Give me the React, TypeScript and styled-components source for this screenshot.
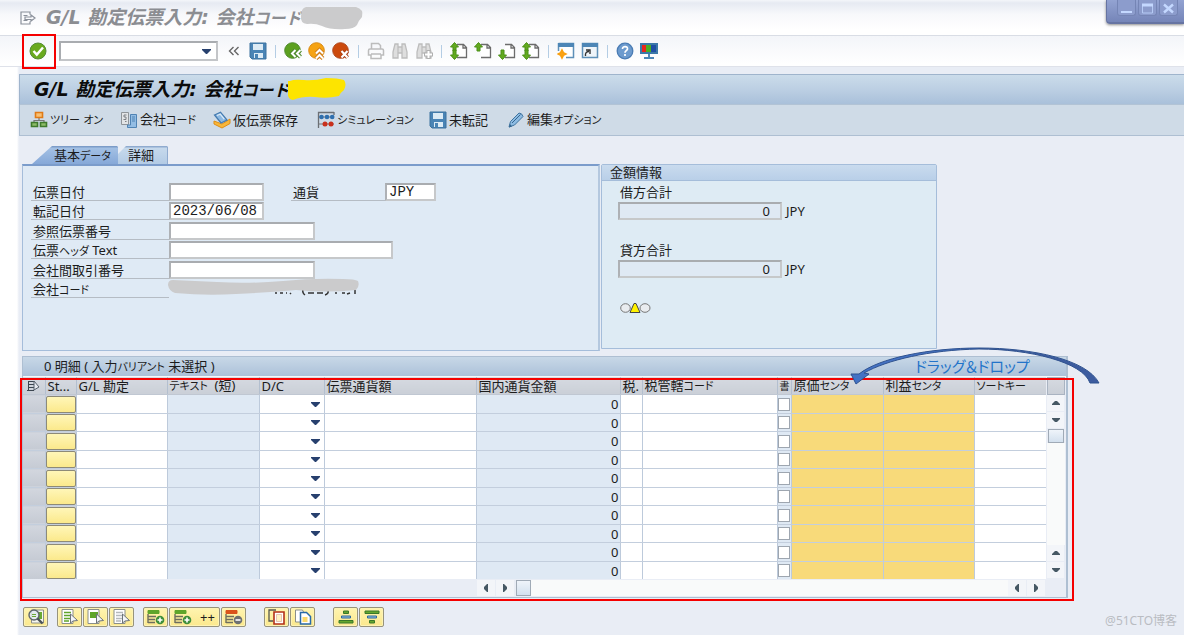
import React from "react";
import styled, { createGlobalStyle, css } from "styled-components";

const ui = `"Noto Sans", "Noto Sans CJK JP", sans-serif`;
const heading = `"DejaVu Sans", "Noto Sans CJK JP", sans-serif`;

const GlobalStyle = createGlobalStyle`
  * { box-sizing: border-box; }
  body {
    margin: 0;
    background: linear-gradient(90deg, #fff 0 17px, #e9edf5 19px);
    font-family: ${ui};
    font-size: 13px;
    line-height: 18px;
    color: #1c1c1c;
    font-feature-settings: "palt";
  }
  button, input, select { font: inherit; color: inherit; margin: 0; padding: 0; border: 0; border-radius: 0; }
  button { background: none; }
  svg { display: block; flex: none; }
`;

/* ---------- text ---------- */

/* Katakana is set one step smaller than the kanji around it. */
const KanaRun = styled.span`
  font-size: 11px;
`;

const Kana = ({ text }: { text: string }) => (
  <span>
    {text.split(/([ァ-ヶー]+)/).map((part, i) => (i % 2 ? <KanaRun key={i}>{part}</KanaRun> : part))}
  </span>
);

/* ---------- frame ---------- */

const Page = styled.div`
  position: relative;
  min-height: 100vh;
  overflow: hidden;
`;

const TitleBar = styled.header`
  display: flex;
  align-items: center;
  height: 36px;
  padding: 0 0 0 20px;
  gap: 10px;
  background: linear-gradient(#f4f6fa 0, #e6eaf2 3px, #f7f8fb 14px, #fff 30px);
  border-bottom: 1px solid #d9dde5;
`;

const Title = styled.h1<{ $muted?: boolean }>`
  display: flex;
  align-items: center;
  margin: 0;
  font: italic bold 19px/24px ${heading};
  white-space: pre;
  color: ${(p) => (p.$muted ? "#8b8d92" : "#0b0b0b")};
  ${KanaRun} { font-size: 16px; }
`;

const Redaction = styled.svg`
  margin-left: -2px;
`;

const WindowControls = styled.div`
  position: absolute;
  top: 0;
  right: 0;
  display: flex;
  gap: 2px;
  width: 78px;
  height: 24px;
  padding: 0 0 0 10px;
  background: linear-gradient(#93a3d2, #7585b8);
  border: solid #6674a2;
  border-width: 0 0 2px 1px;
  border-radius: 0 0 0 4px;
  box-shadow: 0 1px 3px #888;
`;

const WindowButton = styled.button`
  display: grid;
  place-items: center;
  width: 19px;
  height: 16px;
  border: 1px solid #7585b5;
  border-top: 0;
  border-radius: 0 0 3px 3px;
  background: #8c9ccc;
`;

const SystemBar = styled.nav`
  display: flex;
  align-items: center;
  height: 31px;
  padding-left: 26px;
  background: linear-gradient(#f3f5f9, #fff 28px);
  border-bottom: 1px solid #dfe2ea;
`;

const IconButton = styled.button`
  display: grid;
  place-items: center;
  width: 24px;
  height: 24px;
`;

const Marked = styled.div`
  position: relative;
  margin-right: 9px;
  &::after {
    content: "";
    position: absolute;
    inset: -5px -6px -6px -4px;
    border: 2px solid #f50000;
    pointer-events: none;
  }
`;

const CommandField = styled.div`
  display: flex;
  align-items: center;
  width: 159px;
  height: 20px;
  margin-right: 4px;
  background: #fff;
  border: 2px solid #b3b5b9;
  border-color: #a9acb0 #c3c5c8 #c3c5c8 #a9acb0;
  input { flex: 1; min-width: 0; background: none; outline: 0; }
  button { width: 20px; height: 16px; display: grid; place-items: center; }
`;

const Divider = styled.span`
  width: 1px;
  height: 13px;
  margin: 0 5px;
  background: #b4cde4;
`;

const Main = styled.main`
  margin-left: 19px;
  padding-top: 7px;
`;

const ScreenTitle = styled.div`
  display: flex;
  align-items: center;
  height: 31px;
  padding-left: 14px;
  background: linear-gradient(#cbdcea, #bccfe3 50%, #a9c0da);
  border: solid #9fb4cc;
  border-width: 1px 0 1px 1px;
  border-bottom-color: #b2c3d5;
`;

const AppBar = styled.nav`
  display: flex;
  align-items: center;
  height: 31px;
  padding: 0 0 1px 10px;
  background: #cfdbe7;
  border: solid #aebfd2;
  border-width: 0 0 1px 1px;
`;

const AppButton = styled.button<{ $slot: number }>`
  display: flex;
  align-items: center;
  gap: 2px;
  width: ${(p) => p.$slot}px;
  height: 22px;
  white-space: nowrap;
`;

/* ---------- header data ---------- */

const Workspace = styled.div`
  padding: 10px 116px 0 3px;
`;

const Tabs = styled.div`
  display: flex;
  height: 18px;
  padding-left: 10px;
`;

const Tab = styled.button<{ $active?: boolean }>`
  height: 18px;
  line-height: 18px;
  text-align: left;
  white-space: nowrap;
  ${(p) =>
    p.$active
      ? css`
          width: 86px;
          padding-left: 22px;
          background: linear-gradient(#7c9cc8 0 1px, #a3c0e4 2px, #86a8d8);
          clip-path: polygon(20px 0, 85px 0, 86px 1px, 86px 100%, 0 100%);
        `
      : css`
          width: 50px;
          padding-left: 10px;
          background: linear-gradient(#90abcf 0 1px, #c6d9ec 2px, #b3cbe5);
          border-right: 1px solid #90abcf;
          clip-path: polygon(8px 0, 49px 0, 50px 1px, 50px 100%, 0 100%, 0 8px);
        `}
`;

const Panels = styled.div`
  display: flex;
  gap: 1px;
  padding-right: 131px;
`;

const FormPanel = styled.section`
  flex: 1;
  height: 187px;
  padding: 17px 0 0 8px;
  background: #dfeaf5;
  border: 1px solid #a5bdda;
  border-top: 2px solid #7b9ccb;
  border-right: 2px solid #b4c8df;
`;

const FormRow = styled.div`
  display: flex;
  height: 19px;
  &:nth-child(even) { height: 20px; }
`;

const FieldLabel = styled.label<{ $w: number; $gap?: number }>`
  width: ${(p) => p.$w}px;
  height: 18px;
  margin-left: ${(p) => p.$gap ?? 0}px;
  padding-left: 2px;
  border-bottom: 1px solid #b5bcc4;
  white-space: pre;
`;

const Field = styled.input<{ $w: number }>`
  width: ${(p) => p.$w}px;
  height: 18px;
  padding-left: 2px;
  font: 14px/14px "Liberation Mono", monospace;
  background: #fff;
  border: 2px solid;
  border-color: #a9acb0 #c6c8ca #c6c8ca #aeb1b5;
  &:read-only {
    padding-right: 10px;
    font: 13px/14px ${ui};
    text-align: right;
    background: #dfe9f4;
  }
`;

const Redacted = styled.svg`
  margin: -3px 0 0 -2px;
`;

const AmountPanel = styled.section`
  width: 336px;
  height: 185px;
  background: #deebf4;
  border: 1px solid #a5bdda;
  border-radius: 2px 2px 0 0;
`;

const PanelHeading = styled.h2`
  height: 16px;
  margin: 0;
  padding-left: 8px;
  font-size: 13px;
  line-height: 14px;
  font-weight: normal;
  background: linear-gradient(#c9dbee, #b9cfe8);
  border-bottom: 1px solid #a5bdda;
`;

const AmountBody = styled.div`
  padding: 2px 16px;
`;

const AmountGroup = styled.div`
  height: 58px;
  label { display: block; height: 19px; padding-left: 2px; }
`;

const AmountLine = styled.div`
  display: flex;
  gap: 4px;
  white-space: nowrap;
`;

/* ---------- item table ---------- */

const ItemsFrame = styled.section`
  position: relative;
  margin-top: 5px;
  border: 1px solid #aebfd2;
  border-right-width: 2px;
  background: #e9edf5;
`;

const ItemsTitle = styled.h2`
  height: 20px;
  margin: 0;
  padding-left: 21px;
  font-size: 13px;
  line-height: 19px;
  font-weight: normal;
  background: linear-gradient(#c8d8e7, #acc1d9);
  border-bottom: 1px solid #f4f7fa;
  white-space: pre;
`;

const RedFrame = styled.div`
  position: absolute;
  inset: 21px -8px -4px -3px;
  border: 2px solid #f50000;
  pointer-events: none;
`;

const ItemsBody = styled.div`
  display: grid;
  grid-template-columns: 1fr 20px;
`;

const Items = styled.table`
  width: 100%;
  table-layout: fixed;
  border-collapse: collapse;
  th {
    height: 17px;
    padding: 0 0 0 2px;
    font-weight: normal;
    text-align: left;
    line-height: 16px;
    white-space: pre;
    background: linear-gradient(#d6dae1, #cacfd7);
    border-right: 1px solid #b3bfcf;
    border-bottom: 1px solid #c0c7d2;
  }
  th svg { margin-left: 1px; }
  td {
    height: 19px;
    padding: 0;
    line-height: 16px;
    background: #fff;
    border-right: 1px solid #bdcadb;
    border-bottom: 1px solid #c3cedd;
  }
  tr:nth-child(even) td { height: 18px; }
  tr:last-child td { height: 17px; border-bottom: 0; }
  td:last-child, th:last-child { border-right: 0; }
`;

const FlagHeading = styled.span`
  font-size: 10px;
`;

const Cell = styled.td<{ $tone?: "blue" | "gold" | "grey" }>`
  && {
    background: ${(p) =>
      p.$tone === "blue" ? "#dfe9f4" : p.$tone === "gold" ? "#f8da7a" : p.$tone === "grey" ? "#cdd2db" : "#fff"};
    text-align: ${(p) => (p.$tone === "blue" ? "right" : "left")};
    padding-right: ${(p) => (p.$tone === "blue" ? "1px" : "0")};
  }
`;

const CellInput = styled.input`
  display: block;
  width: 100%;
  height: 15px;
  background: transparent;
  outline: 0;
`;

const RowSelector = styled.button`
  display: block;
  width: 100%;
  height: 16px;
  background: linear-gradient(#d2d6de, #c6cbd4);
`;

const StatusButton = styled.button`
  display: block;
  width: 100%;
  height: 17px;
  background: linear-gradient(#fff6b8, #fbe98c);
  border: 1px solid #8d8a78;
  border-radius: 2px;
`;

const Picker = styled.div`
  position: relative;
  select {
    display: block;
    width: 100%;
    height: 15px;
    appearance: none;
    background: transparent;
    outline: 0;
  }
  svg { position: absolute; right: 4px; top: 5px; pointer-events: none; }
`;

const Tick = styled.input`
  display: block;
  width: 12px;
  height: 13px;
  appearance: none;
  background: #fff;
  border: 1px solid #9ea6b0;
`;

const VerticalBar = styled.div`
  display: flex;
  flex-direction: column;
  padding: 0 1px;
`;

const HorizontalBar = styled.div`
  display: flex;
  height: 18px;
  margin: 0 20px 0 454px;
  padding: 1px 0;
  button { width: 19px; }
`;

const Corner = styled.button`
  height: 18px;
  background: linear-gradient(#d6dae1, #cacfd7);
  border: 1px solid #a9b3c1;
`;

const Arrow = styled.button`
  display: grid;
  place-items: center;
  width: 18px;
  height: 17px;
  background: #f3f5f9;
  border: solid #e9edf5;
  border-width: 0 1px 1px 0;
`;

const Track = styled.div`
  flex: 1;
  background: #f9fafa;
`;

const Thumb = styled.div<{ $horizontal?: boolean }>`
  width: ${(p) => (p.$horizontal ? 15 : 16)}px;
  height: ${(p) => (p.$horizontal ? 16 : 14)}px;
  margin: ${(p) => (p.$horizontal ? "0 0 0 1px" : "0 1px")};
  background: linear-gradient(#eff4fa, #d3e0ee);
  border: 1px solid #a0aab6;
`;

const FooterBar = styled.div`
  display: flex;
  gap: 1px;
  margin: 9px 0 0 1px;
`;

const FooterButton = styled.button<{ $w?: number; $gap?: number }>`
  display: flex;
  align-items: center;
  justify-content: center;
  gap: 8px;
  width: ${(p) => p.$w ?? 25}px;
  height: 20px;
  margin-left: ${(p) => p.$gap ?? 0}px;
  background: linear-gradient(#fff4b0, #fbe88d);
  border: 1px solid #97937c;
  border-radius: 2px;
  box-shadow: inset 0 0 0 1px #fdf3b4;
`;

const Callout = styled.div`
  position: absolute;
  top: -11px;
  right: -37px;
  width: 254px;
  height: 42px;
  svg { position: absolute; inset: 0; }
`;

const CalloutText = styled.span`
  position: absolute;
  top: 10px;
  left: 66px;
  font-size: 15px;
  line-height: 20px;
  color: #2273c9;
  white-space: nowrap;
`;

const Watermark = styled.span`
  position: absolute;
  right: 7px;
  bottom: 5px;
  font-size: 12px;
  color: #b9bcc2;
`;

/* ---------- icons ---------- */

type IconProps = { children: React.ReactNode; w?: number; h?: number };
const Icon = ({ children, w = 18, h = 18 }: IconProps) => (
  <svg width={w} height={h} viewBox={`0 0 ${w} ${h}`} fill="none" aria-hidden="true">
    {children}
  </svg>
);

const OkIcon = () => (
  <Icon>
    <circle cx="9" cy="9" r="8" fill="#6aaa1e" stroke="#548c35" />
    <path d="M4.500 9l3.300 3.600L14 5.500" stroke="#fff" strokeWidth="2.400" />
  </Icon>
);
const SaveIcon = () => (
  <Icon>
    <path d="M1 1h16v16H3l-2-2z" fill="#4a84b5" stroke="#3c739f" />
    <path d="M4 2h10v6H4z" fill="#dcebf5" />
    <path d="M5 11h9v5H5z" fill="#dcebf5" />
    <path d="M6 12h3v4H6z" fill="#4a84b5" />
  </Icon>
);
const BackIcon = () => (
  <Icon>
    <circle cx="8.500" cy="8.500" r="7.800" fill="#5ca01f" stroke="#4e8a2d" />
    <path d="M11.500 8l-3.500 3.500 3.500 3.500M16.500 8L13 11.500l3.500 3.500" stroke="#4e8a2d" strokeWidth="4" />
    <path d="M11.500 8l-3.500 3.500 3.500 3.500M16.500 8L13 11.500l3.500 3.500" stroke="#fff" strokeWidth="2" />
  </Icon>
);
const ExitIcon = () => (
  <Icon>
    <circle cx="8.500" cy="8.500" r="7.800" fill="#f6a313" stroke="#d98b17" />
    <path d="M8 11.500L11.500 8l3.500 3.500M8 16.500l3.500-3.500 3.500 3.500" stroke="#d07d18" strokeWidth="4" />
    <path d="M8 11.500L11.500 8l3.500 3.500M8 16.500l3.500-3.500 3.500 3.500" stroke="#fff" strokeWidth="2" />
  </Icon>
);
const CancelIcon = () => (
  <Icon>
    <circle cx="8.500" cy="8.500" r="7.800" fill="#cc4a0c" stroke="#b04a20" />
    <path d="M9.500 9l6 6.500M15.500 9l-6 6.500" stroke="#a83a10" strokeWidth="4" />
    <path d="M9.500 9l6 6.500M15.500 9l-6 6.500" stroke="#fff" strokeWidth="2.200" />
  </Icon>
);
const PrintIcon = () => (
  <Icon>
    <path d="M4.500 7V1.500h7l2 2V7M1.500 8.500q0-1.500 1.500-1.500h12q1.500 0 1.500 1.500V13H14v3.500H4V13H1.500zM4 12h10" stroke="#bcbcbc" strokeWidth="1.500" />
  </Icon>
);
const FindIcon = ({ more }: { more?: boolean }) => (
  <Icon>
    <path d="M4 2h3v3h4V2h3l2 8v6h-5v-5H7v5H2v-6zM7 5v6M11 5v6" fill="#dedede" stroke="#bdbdbd" strokeWidth="1.300" />
    {more && <path d="M13.500 8v9M9 12.500h9" stroke="#b0b0b0" strokeWidth="4" />}
    {more && <path d="M13.500 9v7M10 12.500h7" stroke="#fff" strokeWidth="2" />}
  </Icon>
);
const PageIcon = ({ up, down }: { up?: boolean; down?: boolean }) => (
  <Icon>
    <path d="M7 2.500h6.500l3 3v10H7M13 2.500V6h3.500" fill="#fff" stroke="#6c6c6c" strokeWidth="1.300" />
    {up && <path d="M4.500 .5L.5 5h2.500v4h3V5h2.500z" fill="#62a91f" stroke="#4b9018" />}
    {down && <path d="M4.500 17.500L.5 13h2.500V8h3v5h2.500z" fill="#62a91f" stroke="#4b9018" />}
  </Icon>
);
const SessionIcon = () => (
  <Icon>
    <path d="M1.500 1.500h15v14H9M1.500 1v8" fill="#fff" stroke="#5e90b8" strokeWidth="1.500" />
    <path d="M1 1h16v4H1z" fill="#4d86b6" />
    <path d="M5 8.500l1.200 2.300L8.500 12l-2.300 1.200L5 15.500l-1.200-2.300L1.500 12l2.300-1.200z" fill="#fba51a" stroke="#f9a010" strokeWidth="2" />
  </Icon>
);
const ShortcutIcon = () => (
  <Icon>
    <path d="M1.500 1.500h15v14h-15z" fill="#eef4f9" stroke="#5e90b8" strokeWidth="1.500" />
    <path d="M1 1h16v4H1z" fill="#4d86b6" />
    <path d="M4.500 14c-.5-3 1-4.500 3.500-4.500M5 8h4v4" stroke="#333" strokeWidth="1.400" />
  </Icon>
);
const HelpIcon = () => (
  <Icon>
    <circle cx="9" cy="9" r="7.800" fill="#6d9bce" stroke="#4a7cb4" strokeWidth="1.300" />
    <path d="M6.500 7c0-3.500 5.500-3 5 0-.3 1.700-2.500 1.800-2.500 3.800M9 12v2" stroke="#fff" strokeWidth="1.700" />
  </Icon>
);
const MonitorIcon = () => (
  <Icon>
    <path d="M0 1h18v11H0z" fill="#3b78a8" />
    <path d="M2 3h4v7H2z" fill="#e8261c" />
    <path d="M6 3h5v7H6z" fill="#4cae22" />
    <path d="M11 3h5v7h-5z" fill="#1f4fa4" />
    <path d="M8 12h2v3h4v2H4v-2h4z" fill="#4d86b6" />
  </Icon>
);
const TreeIcon = () => (
  <Icon>
    <path d="M9 6v4M4 12V9.500h10V12" stroke="#777" strokeWidth="1.200" />
    <path d="M5.500 1.500h7v5h-7z" fill="#f9c173" stroke="#e07a17" strokeWidth="1.600" />
    <path d="M1.500 11.500h6v4h-6zM10.500 11.500h6v4h-6z" fill="#8dbb68" stroke="#3f7a2b" strokeWidth="1.600" />
  </Icon>
);
const CompanyIcon = () => (
  <Icon>
    <path d="M1.500 1.500h7v12h-7z" fill="#e2e4e6" stroke="#8f9499" />
    <path d="M6.500 4h-2.500v2h2v2.500h-2.500M5 10.500h1.500" stroke="#7b7f84" />
    <path d="M10.500 3.500h6v13h-9V14h3z" fill="#93bde4" stroke="#4f83b4" />
    <path d="M12 6h3M12 8h3M12 10h3" stroke="#4f83b4" />
  </Icon>
);
const ParkIcon = () => (
  <Icon>
    <path d="M1 10l8 3 8-5v4.500L9 17l-8-4z" fill="#f8b73a" stroke="#e08e14" />
    <path d="M1.500 4L7.500 1.200 14 9 8 12z" fill="#8db9e2" stroke="#457bb0" strokeWidth="1.300" />
    <path d="M4 4.500L7.200 3.200l4 5" stroke="#dcebf7" strokeWidth="1.300" />
  </Icon>
);
const SimulateIcon = () => (
  <Icon>
    <path d="M1.500 17V1.500H17M17 1v3" stroke="#6b6f74" strokeWidth="1.300" />
    <path d="M2 6h15M2 13h15" stroke="#777" />
    <circle cx="4.500" cy="6" r="2.300" fill="#2f6fae" />
    <circle cx="10" cy="6" r="2.300" fill="#2f6fae" />
    <circle cx="15.200" cy="6" r="2.300" fill="#2f6fae" />
    <circle cx="8" cy="13" r="2.500" fill="#c9301c" />
    <circle cx="14" cy="13" r="2.500" fill="#c9301c" />
  </Icon>
);
const PencilIcon = () => (
  <Icon>
    <path d="M2 16l1.500-5.500L12 2q3 0 4 3.500L7.500 14z" fill="#8dbbe2" stroke="#3f739f" />
    <path d="M5 12L13.500 3.500" stroke="#35668f" />
    <path d="M2 16.500l3-1L3 13z" fill="#35668f" />
  </Icon>
);
const ExitArrowIcon = () => (
  <Icon w={16} h={14}>
    <path d="M10 3.500V1H1v12h9v-2.500M3.500 4.500h4M3.500 9.500h4M5 6h6V4l4 3-4 3V8.500H5z" stroke="#8a909a" strokeWidth="1.200" />
  </Icon>
);
const DropArrow = () => (
  <svg width="9" height="5" viewBox="0 0 9 5"><path d="M0 0h9v1L5 5H4L0 1z" fill="#27406e" /></svg>
);
const ConfigIcon = () => (
  <Icon w={14} h={12}>
    <path d="M8 1.500H2.500M8 4.500H2.500M8 7.500H2.500M1 10.500h7M2.500 1v9" stroke="#3c4650" />
    <path d="M8 1v9l5-3z" fill="#e7eaf0" stroke="#57616c" />
  </Icon>
);

const rotations = { up: 180, down: 0, left: 90, right: 270 };
const ScrollArrow = ({ dir }: { dir: keyof typeof rotations }) => (
  <Arrow aria-label={dir}>
    <svg width="10" height="10" viewBox="0 0 10 10">
      <path d="M1 3h8v1L6 7H4L1 4z" fill="#465864" transform={`rotate(${rotations[dir]} 5 5)`} />
    </svg>
  </Arrow>
);

const ListGlyph = ({ color, fill }: { color: string; fill?: boolean }) => (
  <Icon w={18} h={16}>
    <path d="M1 .5h11v14H1z" fill="#fff" stroke="#8a8f8a" />
    {fill ? <path d="M3 3h8v6H3z" fill={color} /> : <path d="M3 3.500h7M3 6.500h7M3 9.500h6M3 12h5" stroke={color} strokeWidth="1.600" />}
    <path d="M9.500 5v9l2.500-2 4.500-.5z" fill="#f4f6f8" stroke="#6d747a" />
  </Icon>
);
const RowGlyph = ({ color, minus }: { color: string; minus?: boolean }) => (
  <Icon w={18} h={16}>
    <path d="M1 1.500h11v3H1z" fill={color} stroke={color} />
    <path d="M1 7.500h8M1 10.500h7M1 13.500h7M1 5v9" stroke="#6e6e5e" strokeWidth="1.400" />
    <circle cx="13" cy="11" r="4.300" fill={minus ? "#6d7072" : "#3f8f3c"} />
    <path d={minus ? "M10.500 11h5" : "M13 8.500v5M10.500 11h5"} stroke="#fff" strokeWidth="1.600" />
  </Icon>
);
const DetailGlyph = () => (
  <Icon w={18} h={16}>
    <path d="M4.500 1h12v13h-12z" fill="#f6f6ee" stroke="#8a8f8a" />
    <path d="M11 3h4v7h-4z" fill="#69a832" />
    <circle cx="7" cy="6" r="5" fill="#dfe8ee" fillOpacity=".85" stroke="#5e666c" strokeWidth="1.400" />
    <path d="M5 5.500h4M5 7.500h4" stroke="#69a832" />
    <path d="M10.500 9.500L15.500 14.500" stroke="#4c5358" strokeWidth="2.400" />
  </Icon>
);
const CutGlyph = () => (
  <Icon w={18} h={16}>
    <path d="M8 1H1v11h4" stroke="#55584f" strokeWidth="1.300" />
    <path d="M6 3h10v12H6z" fill="#fff" stroke="#b23018" strokeWidth="1.600" />
    <path d="M8.500 5.500h5v7h-5z" fill="#fff2c0" stroke="#d8a090" strokeWidth=".6" />
  </Icon>
);
const CopyGlyph = () => (
  <Icon w={18} h={16}>
    <path d="M1.500 1h7l1 2v10h-8z" fill="#fff" stroke="#8a8f8a" />
    <path d="M6.500 3.500h6l4 4V15h-10z" fill="#fff" stroke="#2869a8" strokeWidth="1.500" />
    <path d="M8.500 8h5v5h-5z" fill="#fbd96b" />
  </Icon>
);
const SortGlyph = ({ desc }: { desc?: boolean }) => (
  <Icon w={18} h={16}>
    <g transform={desc ? "matrix(1 0 0 -1 0 16)" : undefined}>
      <path d="M6.500 2h5v2.500h-5zM2 11.500h14V14H2z" fill="#64a62e" stroke="#39782a" />
      <path d="M4.500 7h9v2h-9z" fill="#8fbce0" stroke="#2c699e" />
    </g>
  </Icon>
);

/* ---------- data ---------- */

const columns: [string, number?][] = [
  ["", 22], ["St...", 31], ["G/L 勘定", 91], ["テキスト  (短)", 92], ["D/C", 65], ["伝票通貨額", 152],
  ["国内通貨金額", 144], ["税.", 22], ["税管轄コード", 135], ["書", 14], ["原価センタ", 92], ["利益センタ", 91], ["ソートキー"],
];
const rows = Array.from({ length: 10 }, (_, i) => i + 1);

const appActions: [string, React.ReactNode, number][] = [
  ["ツリー オン", <TreeIcon />, 90],
  ["会社コード", <CompanyIcon />, 93],
  ["仮伝票保存", <ParkIcon />, 104],
  ["シミュレーション", <SimulateIcon />, 112],
  ["未転記", <SaveIcon />, 78],
  ["編集オプション", <PencilIcon />, 100],
];

const heads = (name: string, i: number) => {
  if (i === 0) return <ConfigIcon />;
  if (name === "書") return <FlagHeading>{name}</FlagHeading>;
  return <Kana text={name} />;
};

const Action = ({ label, children }: { label: string; children: React.ReactNode }) => (
  <IconButton aria-label={label}>{children}</IconButton>
);

export default function App() {
  return (
    <Page>
      <GlobalStyle />
      <TitleBar>
        <ExitArrowIcon />
        <Title $muted>
          <Kana text="G/L 勘定伝票入力: 会社コード" />
          <Redaction width="64" height="24" viewBox="0 0 64 24">
            <path d="M6 1H56q8 2 6 10-3 3-5 8-3 4-12 4-14 1-23-3-7-3-15-2-7-1-6-8Q1 2 6 1z" fill="#cbcbcc" />
          </Redaction>
        </Title>
      </TitleBar>
      <WindowControls>
        <WindowButton aria-label="最小化">
          <Icon w={13} h={12}><path d="M1 10h11" stroke="#c4d8ff" strokeWidth="2" /></Icon>
        </WindowButton>
        <WindowButton aria-label="最大化">
          <Icon w={13} h={12}><path d="M1.500 2v9h10V2" stroke="#b5caf5" /><path d="M1 3h11" stroke="#c4d8ff" strokeWidth="3" /></Icon>
        </WindowButton>
        <WindowButton aria-label="閉じる">
          <Icon w={13} h={12}><path d="M2 2.500l9 8M11 2.500l-9 8" stroke="#c4d8ff" strokeWidth="2.400" /></Icon>
        </WindowButton>
      </WindowControls>
      <SystemBar>
        <Marked><Action label="Enter"><OkIcon /></Action></Marked>
        <CommandField>
          <input aria-label="コマンド" />
          <button aria-label="履歴"><DropArrow /></button>
        </CommandField>
        <Action label="折りたたむ">
          <Icon w={12} h={10}><path d="M5.500 1l-4 4 4 4M10.500 1l-4 4 4 4" stroke="#666" strokeWidth="1.400" /></Icon>
        </Action>
        <Action label="保存"><SaveIcon /></Action>
        <Divider />
        <Action label="戻る"><BackIcon /></Action>
        <Action label="終了"><ExitIcon /></Action>
        <Action label="中止"><CancelIcon /></Action>
        <Divider />
        <Action label="印刷"><PrintIcon /></Action>
        <Action label="検索"><FindIcon /></Action>
        <Action label="次を検索"><FindIcon more /></Action>
        <Divider />
        <Action label="先頭ページ"><PageIcon up down /></Action>
        <Action label="前ページ"><PageIcon up /></Action>
        <Action label="次ページ"><PageIcon down /></Action>
        <Action label="最終ページ"><PageIcon up down /></Action>
        <Divider />
        <Action label="新規セッション"><SessionIcon /></Action>
        <Action label="ショートカット"><ShortcutIcon /></Action>
        <Divider />
        <Action label="ヘルプ"><HelpIcon /></Action>
        <Action label="レイアウト"><MonitorIcon /></Action>
      </SystemBar>

      <Main>
        <ScreenTitle>
          <Title>
            <Kana text="G/L 勘定伝票入力: 会社コード" />
            <Redaction width="58" height="24" viewBox="0 0 58 24">
              <path d="M2 3Q6 1 16 2q10 1 22-2 12 0 18 2 3 4 0 10-4 3-5 6-12 3-24 1-12-1-22 3-6-1-5-8-2-6 0-11z" fill="#fde400" />
            </Redaction>
          </Title>
        </ScreenTitle>
        <AppBar>
          {appActions.map(([label, icon, slot]) => (
            <AppButton key={label} $slot={slot}>{icon}<Kana text={label} /></AppButton>
          ))}
        </AppBar>

        <Workspace>
          <Tabs role="tablist">
            <Tab role="tab" $active><Kana text="基本データ" /></Tab>
            <Tab role="tab">詳細</Tab>
          </Tabs>
          <Panels>
            <FormPanel>
              <FormRow>
                <FieldLabel htmlFor="docDate" $w={138}>伝票日付</FieldLabel>
                <Field id="docDate" $w={95} />
                <FieldLabel htmlFor="currency" $w={94} $gap={27}>通貨</FieldLabel>
                <Field id="currency" $w={51} defaultValue="JPY" />
              </FormRow>
              <FormRow>
                <FieldLabel htmlFor="postDate" $w={138}>転記日付</FieldLabel>
                <Field id="postDate" $w={95} defaultValue="2023/06/08" />
              </FormRow>
              <FormRow>
                <FieldLabel htmlFor="reference" $w={138}>参照伝票番号</FieldLabel>
                <Field id="reference" $w={146} />
              </FormRow>
              <FormRow>
                <FieldLabel htmlFor="headerText" $w={138}><Kana text="伝票ヘッダ Text" /></FieldLabel>
                <Field id="headerText" $w={224} />
              </FormRow>
              <FormRow>
                <FieldLabel htmlFor="interCompany" $w={138}>会社間取引番号</FieldLabel>
                <Field id="interCompany" $w={146} />
              </FormRow>
              <FormRow>
                <FieldLabel as="span" $w={138}><Kana text="会社コード" /></FieldLabel>
                <Redacted width="194" height="22" viewBox="0 0 194 22">
                  <path d="M108 16h2M113 16h3M119 16h1M123 16l1 1M136 12q-1 4 2 6M141 16h6M150 16h6M161 13q1 4-3 5M168 16h2M175 16h3M183 16l-3 1M188 13v4" stroke="#333" strokeWidth="1.500" fill="none" />
                  <path d="M6 3Q28 4 50 5q32 2 66-1 30-3 60-2 12 0 15 2 2 5-2 9-30 3-60 0-20 2-60 4-30 2-61-1-6-2-7-8 0-5 5-5z" fill="#cbcbcc" />
                </Redacted>
              </FormRow>
            </FormPanel>
            <AmountPanel>
              <PanelHeading>金額情報</PanelHeading>
              <AmountBody>
                <AmountGroup>
                  <label htmlFor="debit">借方合計</label>
                  <AmountLine><Field id="debit" $w={164} readOnly value="0" />JPY</AmountLine>
                </AmountGroup>
                <AmountGroup>
                  <label htmlFor="credit">貸方合計</label>
                  <AmountLine><Field id="credit" $w={164} readOnly value="0" />JPY</AmountLine>
                </AmountGroup>
                <Icon w={34} h={18}>
                  <path d="M12 13.500L16 4.500h2l4 9z" fill="#fff200" stroke="#444" />
                  <ellipse cx="7.500" cy="9" rx="4.800" ry="4.300" fill="#e9ecef" stroke="#777" />
                  <ellipse cx="27" cy="9" rx="5" ry="4.300" fill="#e9ecef" stroke="#777" />
                </Icon>
              </AmountBody>
            </AmountPanel>
          </Panels>

          <ItemsFrame>
            <ItemsTitle><Kana text="0 明細 ( 入力バリアント 未選択 )" /></ItemsTitle>
            <ItemsBody>
              <Items>
                <colgroup>
                  {columns.map(([name, w], i) => <col key={name + i} width={w} />)}
                </colgroup>
                <thead>
                  <tr>
                    {columns.map(([name], i) => <th key={name + i}>{heads(name, i)}</th>)}
                  </tr>
                </thead>
                <tbody>
                  {rows.map((n) => (
                    <tr key={n}>
                      <Cell $tone="grey"><RowSelector aria-label={`行 ${n}`} /></Cell>
                      <Cell $tone="grey"><StatusButton aria-label={`状況 ${n}`} /></Cell>
                      <Cell><CellInput aria-label="G/L 勘定" /></Cell>
                      <Cell $tone="blue" />
                      <Cell>
                        <Picker>
                          <select aria-label="D/C"><option /></select>
                          <DropArrow />
                        </Picker>
                      </Cell>
                      <Cell><CellInput aria-label="伝票通貨額" /></Cell>
                      <Cell $tone="blue">0</Cell>
                      <Cell><CellInput aria-label="税コード" /></Cell>
                      <Cell><CellInput aria-label="税管轄コード" /></Cell>
                      <Cell $tone="blue"><Tick type="checkbox" aria-label="書" /></Cell>
                      <Cell $tone="gold"><CellInput aria-label="原価センタ" /></Cell>
                      <Cell $tone="gold"><CellInput aria-label="利益センタ" /></Cell>
                      <Cell><CellInput aria-label="ソートキー" /></Cell>
                    </tr>
                  ))}
                </tbody>
              </Items>
              <VerticalBar>
                <Corner aria-label="設定" />
                <ScrollArrow dir="up" />
                <ScrollArrow dir="down" />
                <Thumb />
                <Track />
                <ScrollArrow dir="up" />
                <ScrollArrow dir="down" />
              </VerticalBar>
            </ItemsBody>
            <HorizontalBar>
              <ScrollArrow dir="left" />
              <ScrollArrow dir="right" />
              <Thumb $horizontal />
              <Track />
              <ScrollArrow dir="left" />
              <ScrollArrow dir="right" />
            </HorizontalBar>
            <RedFrame />
            <Callout>
              <CalloutText>ドラッグ＆ドロップ</CalloutText>
              <svg width="254" height="42" viewBox="0 0 254 42">
                <path d="M130 2C185 2 238 14 250 37h-9C234 16 180 3 130 3z" fill="#3d5c9f" stroke="#2f528f" />
                <path d="M130 2C80 2 30 12 10 28L2 28l5 10 13-10-5-1C38 14 80 4 130 3z" fill="#4472c4" stroke="#2f528f" />
              </svg>
            </Callout>
          </ItemsFrame>

          <FooterBar>
            <FooterButton aria-label="詳細"><DetailGlyph /></FooterButton>
            <FooterButton $gap={8} aria-label="全選択"><ListGlyph color="#5fa52a" /></FooterButton>
            <FooterButton aria-label="範囲選択"><ListGlyph color="#5fa52a" fill /></FooterButton>
            <FooterButton aria-label="選択解除"><ListGlyph color="#b5b9bc" /></FooterButton>
            <FooterButton $gap={8} aria-label="行挿入"><RowGlyph color="#5fa52a" /></FooterButton>
            <FooterButton $w={51}><RowGlyph color="#5fa52a" />++</FooterButton>
            <FooterButton aria-label="行削除"><RowGlyph color="#d9531c" minus /></FooterButton>
            <FooterButton $gap={17} aria-label="切り取り"><CutGlyph /></FooterButton>
            <FooterButton aria-label="コピー"><CopyGlyph /></FooterButton>
            <FooterButton $gap={17} aria-label="昇順"><SortGlyph /></FooterButton>
            <FooterButton aria-label="降順"><SortGlyph desc /></FooterButton>
          </FooterBar>
        </Workspace>
      </Main>
      <Watermark>@51CTO博客</Watermark>
    </Page>
  );
}
